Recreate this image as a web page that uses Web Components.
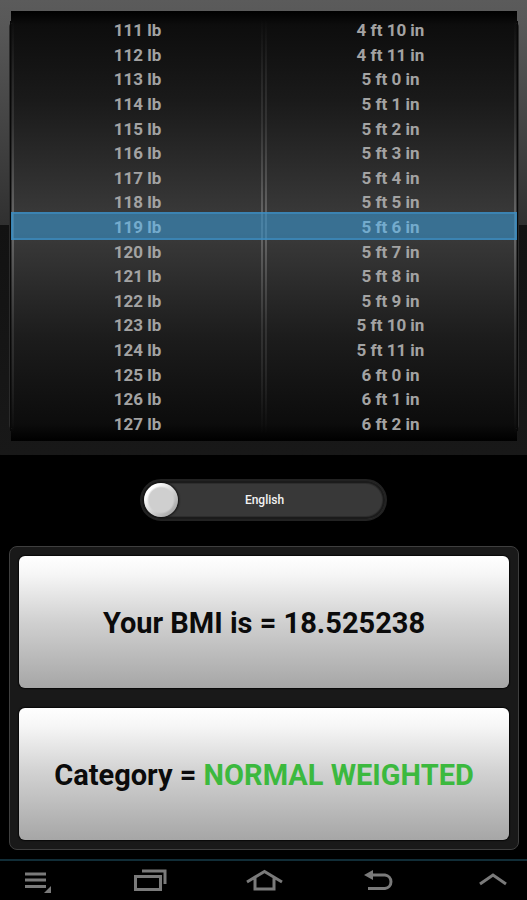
<!DOCTYPE html>
<html lang="en">
<head>
<meta charset="utf-8">
<meta name="viewport" content="width=device-width, initial-scale=1">
<title>BMI Calculator</title>
<style>
html, body { margin: 0; background: #000; }
body { font-family: Roboto, "Liberation Sans", sans-serif; }
</style>
</head>
<body>
<bmi-app></bmi-app>

<template id="app">
<style>
:host { display: flex; flex-direction: column; min-height: 100vh; background: #000; box-sizing: border-box; }
main { flex: 1; display: flex; flex-direction: column; }
.switch { display: flex; justify-content: center; padding: 24px 0 25px; }
.green { color: #3cb93e; }
</style>
<main>
  <wheel-frame>
    <wheel-picker name="weight" label="Weight" from="111" to="127" value="119"></wheel-picker>
    <wheel-picker name="height" label="Height" from="58" to="74" value="66" unit="ft"></wheel-picker>
  </wheel-frame>
  <div class="switch"><unit-switch>English</unit-switch></div>
  <result-panel>
    <result-card>Your BMI is = 18.525238</result-card>
    <result-card>Category = <span class="green">NORMAL WEIGHTED</span></result-card>
  </result-panel>
</main>
<system-bar></system-bar>
</template>

<template id="frame">
<style>
:host { display: block; padding: 11px 10px 14px 11px;
  background: linear-gradient(#5b5b5b, #585858 24px, #303030 225px, #121212 225px, #181818 100%); }
.wheels { position: relative; display: grid; grid-template-columns: 1fr 1fr;
  background: linear-gradient(#000, #0d0d0d 14px, #1a1a1a 90px, #3c3c3c 50%, #1c1c1c 76%, #0c0c0c 96%, #000); }
.wheels::before { content: ""; position: absolute; left: -2px; right: -2px; top: 12px; bottom: 12px;
  border: solid #2b2b2b; border-width: 0 1px; border-radius: 4px; }
.wheels::after { content: ""; position: absolute; left: -1px; right: -1px; top: 10px; bottom: 10px;
  border: solid #080808; border-width: 0 1px; }
.band { position: absolute; left: 0; right: 0; top: 50%; height: 28px; margin-top: -14px; box-sizing: border-box;
  background: rgba(56, 143, 195, .64); border: 2px solid rgba(62, 145, 200, .6); pointer-events: none; }
</style>
<div class="wheels"><slot></slot><div class="band"></div></div>
</template>

<template id="picker">
<style>
:host { display: block; position: relative; min-width: 0; }
:host::before, :host::after { content: ""; position: absolute; top: 8px; bottom: 8px; width: 2px;
  background: linear-gradient(transparent, #333 25%, #6a6a6a 50%, #333 75%, transparent); }
:host::before { left: 1px; }
:host::after { right: 1px; }
.rows { padding: 7px 0 5px; height: 418px; display: grid; grid-auto-rows: 1fr; }
label { display: flex; align-items: center; justify-content: center; min-height: 0;
  font-size: 17px; line-height: 24px; font-weight: 700; color: #a3a3a3; cursor: pointer; }
label:has(:checked) { color: #dedede; }
input { appearance: none; width: 0; height: 0; margin: 0; }
</style>
<div class="rows" role="radiogroup"></div>
</template>

<template id="switch">
<style>
:host { display: block; width: 47%; max-width: 320px; }
label { display: grid; grid-template-columns: 36px 1fr 34px; align-items: center; height: 42px; box-sizing: border-box;
  padding: 0 2px; border: 2px solid #222; border-radius: 21px; cursor: pointer;
  background: #383838; box-shadow: inset 0 0 0 2px #1b1b1b, inset 0 0 0 3px #2d2d2d; }
input { appearance: none; margin: 0; width: 34px; height: 34px; border-radius: 50%; cursor: pointer;
  background: radial-gradient(circle, #cfcfcf 12px, transparent 14px), linear-gradient(135deg, #fff 20%, #aaa 85%);
  box-shadow: 0 0 2px 1px #111; }
span { text-align: center; font-size: 12px; line-height: 16px; font-weight: 500; color: #f2f2f2; }
</style>
<label><input type="checkbox" role="switch"><span><slot></slot></span></label>
</template>

<template id="panel">
<style>
:host { display: flex; flex-direction: column; gap: 20px; margin: 0 8px 9px 9px; padding: 9px;
  border: 1px solid #3f3f3f; border-radius: 8px; background: #191919; }
</style>
<slot></slot>
</template>

<template id="card">
<style>
:host { display: flex; align-items: center; justify-content: center; min-height: 132px; box-sizing: border-box;
  padding-top: 2px; border-radius: 6px; background: linear-gradient(#fff, #f6f6f6 14%, #d2d2d2 48%, #a6a6a6);
  box-shadow: 0 0 1px 1px #090909; }
p { margin: 0; font-size: 29px; line-height: 36px; font-weight: 700; color: #0b0b0b; text-align: center; }
</style>
<p><slot></slot></p>
</template>

<template id="bar">
<style>
:host { display: block; border-top: 2px solid #112d37; background: #000; }
nav { display: flex; justify-content: space-between; height: 40px; padding: 0 12px; }
button { appearance: none; border: 0; padding: 0; margin: 0; background: none; width: 46px; color: #7a7a7a; cursor: pointer; }
svg { display: block; width: 46px; height: 40px; fill: none; stroke: currentColor; stroke-width: 3; }
</style>
<nav>
  <button aria-label="Menu"><svg viewBox="0 0 46 40"><path d="M13 13H34M13 19H34M13 25.500H34"/><path d="M39 25V32H32Z" fill="currentColor" stroke="none"/></svg></button>
  <button aria-label="Recent apps"><svg viewBox="0 0 46 40"><path d="M9.500 15.500H34.500V28.500H9.500Z"/><path d="M16 10H39V23"/></svg></button>
  <button aria-label="Home"><svg viewBox="0 0 46 40"><path d="M6 21L23.500 10.500L41 21M14 17V28H33V17"/></svg></button>
  <button aria-label="Back"><svg viewBox="0 0 46 40"><path d="M16 14H30A6.800 6.800 0 0 1 30 27.500H13"/><path d="M9 14L18 9V19Z" fill="currentColor" stroke="none"/></svg></button>
  <button aria-label="Expand"><svg viewBox="0 0 46 40"><path d="M11 23L24 14L37 23"/></svg></button>
</nav>
</template>

<script>
class Base extends HTMLElement {
  constructor() {
    super();
    this.attachShadow({ mode: "open" });
    this.shadowRoot.append(document.getElementById(this.constructor.template).content.cloneNode(true));
  }
}
class WheelFrame extends Base { static template = "frame"; }
class UnitSwitch extends Base { static template = "switch"; }
class ResultPanel extends Base { static template = "panel"; }
class ResultCard extends Base { static template = "card"; }
class SystemBar extends Base { static template = "bar"; }
class BmiApp extends Base { static template = "app"; }
class WheelPicker extends Base {
  static template = "picker";
  connectedCallback() {
    const set = this.shadowRoot.querySelector(".rows");
    if (set.querySelector("label")) return;
    set.setAttribute("aria-label", this.getAttribute("label"));
    const feet = this.getAttribute("unit") === "ft";
    const last = Number(this.getAttribute("to"));
    for (let v = Number(this.getAttribute("from")); v <= last; v++) {
      const label = document.createElement("label");
      const input = document.createElement("input");
      input.type = "radio";
      input.name = this.getAttribute("name");
      input.value = v;
      input.checked = v === Number(this.getAttribute("value"));
      const text = document.createElement("span");
      text.textContent = feet ? `${Math.floor(v / 12)} ft ${v % 12} in` : `${v} lb`;
      label.append(input, text);
      set.append(label);
    }
  }
}
customElements.define("wheel-frame", WheelFrame);
customElements.define("wheel-picker", WheelPicker);
customElements.define("unit-switch", UnitSwitch);
customElements.define("result-panel", ResultPanel);
customElements.define("result-card", ResultCard);
customElements.define("system-bar", SystemBar);
customElements.define("bmi-app", BmiApp);
</script>
</body>
</html>
